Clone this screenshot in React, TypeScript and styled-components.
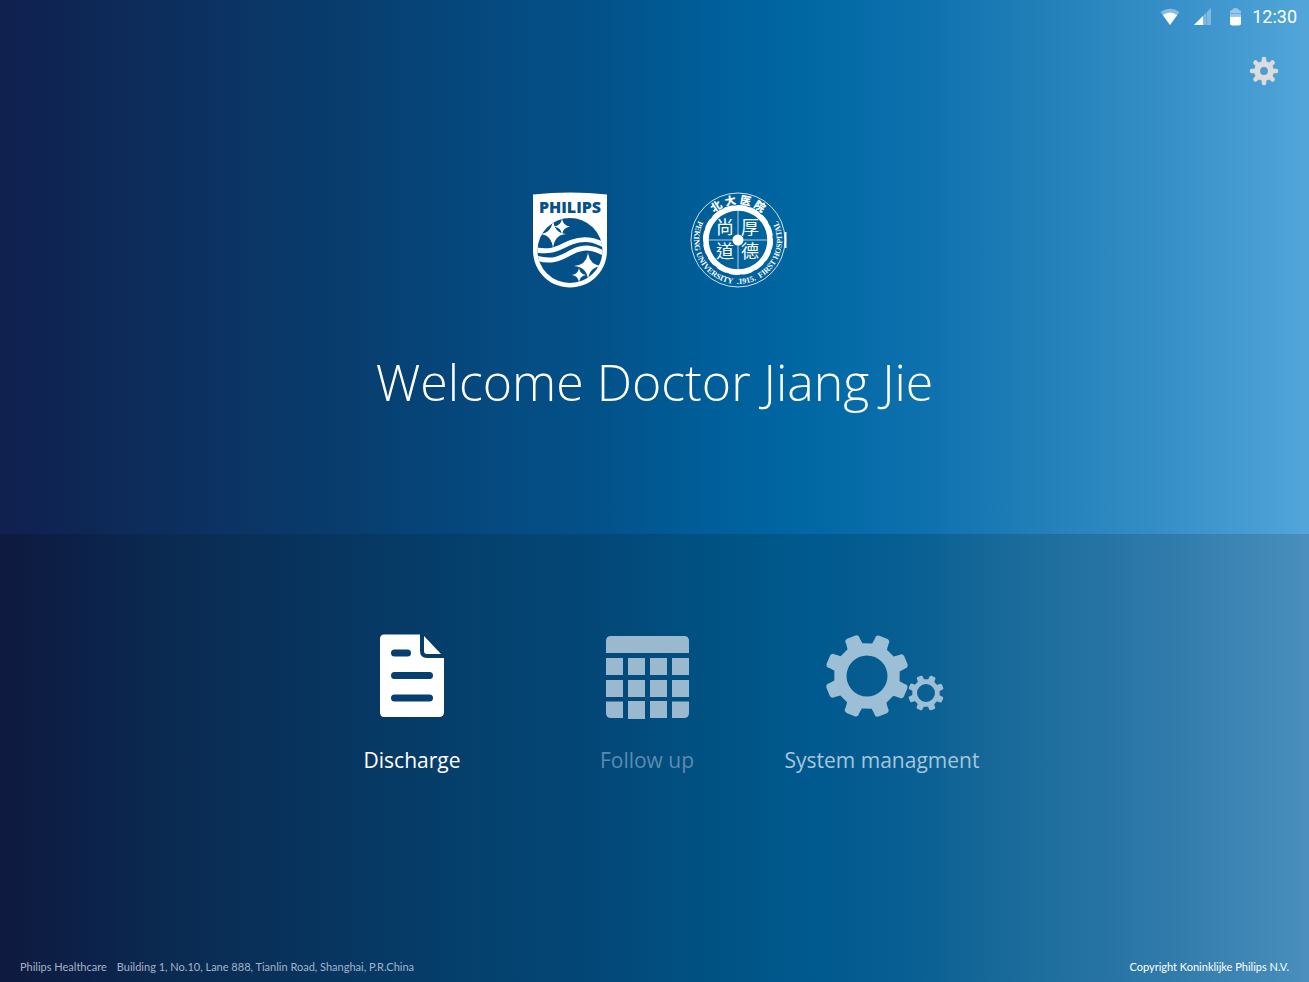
import React from "react";
import styled, { createGlobalStyle } from "styled-components";

const GlobalStyle = createGlobalStyle`
  *, *::before, *::after { box-sizing: border-box; }
  body {
    margin: 0;
    font-family: "Open Sans", "Noto Sans", sans-serif;
    color: #fff;
  }
`;

const Screen = styled.div`
  min-height: 100vh;
  display: grid;
  grid-template-rows: 534fr 448fr;
`;

const Hero = styled.header`
  display: flex;
  flex-direction: column;
  align-items: center;
  background: linear-gradient(
    90deg,
    #10204f 0%,
    #0d2a58 9%,
    #0b3464 18%,
    #073f70 28%,
    #054a80 38%,
    #03528a 46%,
    #005e99 54%,
    #0067a3 61%,
    #0c70ad 70%,
    #2380b9 80%,
    #3a93ca 91%,
    #52a6da 100%
  );
`;

const StatusBar = styled.div`
  align-self: stretch;
  display: flex;
  justify-content: flex-end;
  align-items: center;
  height: 34px;
  padding-right: 12px;
`;

const StatusIcons = styled.div`
  display: flex;
  align-items: center;
  gap: 13px;
  margin-right: 6px;
`;

const Clock = styled.time`
  font: 400 18px/34px Roboto, sans-serif;
`;

const Tools = styled.div`
  align-self: stretch;
  display: flex;
  justify-content: flex-end;
  padding: 22px 30px 0 0;
`;

const IconButton = styled.button`
  display: flex;
  padding: 0;
  border: 0;
  background: none;
  cursor: pointer;
`;

const Logos = styled.div`
  display: flex;
  align-items: flex-start;
  gap: 82px;
  margin: 106px 0 0 10px;
`;

const Title = styled.h1`
  margin: 60px 0 0;
  font-size: 50px;
  line-height: 68px;
  font-weight: 300;
`;

const Panel = styled.main`
  display: flex;
  flex-direction: column;
  justify-content: space-between;
  background: linear-gradient(
    90deg,
    #0f1a3f 0%,
    #0c2048 6%,
    #0b2950 12%,
    #07355f 25%,
    #053f6c 35%,
    #034878 46%,
    #005384 55%,
    #00598e 62%,
    #075e92 69%,
    #196a9a 77%,
    #2f7aaa 89%,
    #4a8fbd 100%
  );
`;

const Menu = styled.nav`
  display: grid;
  grid-template-columns: repeat(3, 235px);
  justify-content: center;
  padding: 98px 15px 0 0;
`;

const MenuItem = styled.button<{ $tone: string }>`
  display: flex;
  flex-direction: column;
  align-items: center;
  gap: 26px;
  padding: 0;
  border: 0;
  background: none;
  color: ${(p) => p.$tone};
  font: 400 21px/28px "Open Sans", "Noto Sans", sans-serif;
  white-space: nowrap;
  cursor: pointer;
`;

const Footer = styled.footer`
  display: flex;
  justify-content: space-between;
  padding: 0 20px 6px;
  font: 400 11px/18px Lato, sans-serif;
`;

const Address = styled.address`
  display: flex;
  gap: 10px;
  font-style: normal;
  color: #a3b3c9;
`;

function gearPath(cx: number, cy: number, outer: number, inner: number, hole: number, start: number, base: number, tip: number) {
  const pt = (r: number, deg: number) => {
    const a = (deg * Math.PI) / 180;
    return `${(cx + r * Math.cos(a)).toFixed(2)} ${(cy + r * Math.sin(a)).toFixed(2)}`;
  };
  const shoulder = outer * 0.91;
  let d = "";
  for (let i = 0; i < 8; i++) {
    const a = start + i * 45;
    d += `${i ? "L" : "M"}${pt(inner, a - base)}L${pt(shoulder, a - tip)}`;
    d += `Q${pt(outer, a - tip)} ${pt(outer, a - tip + 5)}L${pt(outer, a + tip - 5)}`;
    d += `Q${pt(outer, a + tip)} ${pt(shoulder, a + tip)}L${pt(inner, a + base)}`;
  }
  return `${d}Z M${cx + hole} ${cy}A${hole} ${hole} 0 1 0 ${cx - hole} ${cy}A${hole} ${hole} 0 1 0 ${cx + hole} ${cy}Z`;
}

const star = (x: number, y: number, rx: number, ry: number) => {
  const k = 1;
  return `M${x} ${y - ry}Q${x + k} ${y - k} ${x + rx} ${y}Q${x + k} ${y + k} ${x} ${y + ry}Q${x - k} ${y + k} ${x - rx} ${y}Q${x - k} ${y - k} ${x} ${y - ry}Z`;
};

const WifiIcon = () => (
  <svg width="20" height="18" viewBox="0 0 20 18" aria-label="Wi-Fi" role="img">
    <path d="M.5 4Q10 -2.500 19.500 4L10 17Z" fill="#fff" opacity=".4" />
    <path d="M2.800 7Q10 2 17.200 7L10 17Z" fill="#fff" opacity=".95" />
  </svg>
);

const SignalIcon = () => (
  <svg width="20" height="18" viewBox="0 0 20 18" aria-label="Signal" role="img">
    <path d="M18 0V17H1Z" fill="#fff" opacity=".35" />
    <path d="M10 8V17H1Z" fill="#fff" opacity=".95" />
    <path d="M13.500 4.500V17" stroke="#4a9dd0" strokeWidth="1" opacity=".6" />
  </svg>
);

const BatteryIcon = () => (
  <svg width="20" height="18" viewBox="0 0 20 18" aria-label="Battery" role="img">
    <path d="M4 8V4Q4 2 6 2Q7 0 9.500 0Q12 0 13 2Q15 2 15 4V8Z" fill="#fff" opacity=".45" />
    <path d="M4 5.500H15" stroke="#4a9dd0" opacity=".6" />
    <path d="M4 8.500H15V15.500Q15 17.500 12.500 17.500H6.500Q4 17.500 4 15.500Z" fill="#fff" />
  </svg>
);

const SettingsIcon = () => (
  <svg width="30" height="30" viewBox="0 0 30 30" aria-hidden="true">
    <g fill="none" stroke="#dcdcdc" strokeLinecap="round">
      <circle cx="15" cy="15" r="6.900" strokeWidth="6" />
      {[0, 45, 90, 135, 180, 225, 270, 315].map((a) => (
        <path key={a} d="M15 5.500V3" strokeWidth="4.600" transform={`rotate(${a} 15 15)`} />
      ))}
    </g>
  </svg>
);

const PhilipsShield = () => (
  <svg width="76" height="96" viewBox="0 0 76 96" role="img" aria-label="Philips">
    <path d="M1 2.500Q38 -1.500 75 2.500V58C75 80 58 95.500 38 95.500S1 80 1 58Z" fill="#fff" />
    <text x="38" y="21" textAnchor="middle" fill="#04518a" fontFamily="Open Sans, sans-serif" fontWeight="800" fontSize="16">PHILIPS</text>
    <clipPath id="globe"><circle cx="38" cy="58.500" r="32.500" /></clipPath>
    <circle cx="38" cy="58.500" r="32.500" fill="#04518a" />
    <g clipPath="url(#globe)">
      <g fill="none" stroke="#fff" strokeWidth="5">
        <path d="M2 57.500C22 62 29 54 40 50C52 45.500 62 47 74 54" />
        <path d="M2 65.500C22 72 30 65 40 60C52 54 62 55 74 62.500" />
      </g>
      <g fill="#fff">
        <path d={star(21, 42, 13, 15)} />
        <path d={star(30, 34.500, 8, 8)} />
        <path d={star(56, 74, 14, 14)} />
        <path d={star(47, 83, 7, 7)} />
      </g>
    </g>
  </svg>
);

const HospitalSeal = () => (
  <svg width="98" height="96" viewBox="0 0 98 96" overflow="visible" role="img" aria-label="Peking University First Hospital">
    <defs>
      <path id="sealBottom" d="M12.400 22.100A44 44 0 1 0 83.600 22.100" />
    </defs>
    <circle cx="48" cy="48" r="47" fill="none" stroke="#fff" strokeWidth="1" opacity=".8" />
    <path d="M95.500 40V56" stroke="#fff" strokeWidth="2" />
    <circle cx="48" cy="48" r="32" fill="none" stroke="#fff" strokeWidth="5.500" />
    <circle cx="48" cy="48" r="32.800" fill="none" stroke="#fff" strokeWidth="4.500" strokeDasharray="7 5.881" strokeLinecap="round" />
    <path d="M48 18V78M18 48H78" stroke="#fff" strokeWidth="1" opacity=".7" />
    <circle cx="48" cy="48" r="5.500" fill="#fff" />
    <g fill="#fff" fontFamily="Noto Sans CJK TC, sans-serif" fontSize="18" textAnchor="middle">
      <text x="35" y="42">尚</text>
      <text x="60" y="42">厚</text>
      <text x="35" y="66">道</text>
      <text x="60" y="66">德</text>
    </g>
    <g fill="#fff" fontFamily="Noto Sans CJK SC, sans-serif" fontSize="11" fontWeight="900" textAnchor="middle">
      {["北", "大", "医", "院"].map((c, i) => (
        <text key={c} x="48" y="12" transform={`rotate(${-33 + i * 22} 48 48)`}>{c}</text>
      ))}
    </g>
    <text fill="#fff" fontFamily="Liberation Serif, serif" fontSize="8" fontWeight="700" textAnchor="middle">
      <textPath href="#sealBottom" startOffset="50%">{"PEKING UNIVERSITY\u2002.1915.\u2002FIRST HOSPITAL"}</textPath>
    </text>
  </svg>
);

const DocumentIcon = () => (
  <svg width="66" height="88" viewBox="0 0 66 88" aria-hidden="true">
    <path d="M5 2.500H41V19Q41 26 48 26H65V80Q65 85 60 85H5Q1 85 1 80V7Q1 2.500 5 2.500Z" fill="currentColor" />
    <path d="M45 4L62 22H48Q45 22 45 19Z" fill="currentColor" />
    <path d="M15.500 21H28.500M15.500 43.500H50.500M15.500 66H50.500" stroke="#063f70" strokeWidth="7" strokeLinecap="round" />
  </svg>
);

const CalendarIcon = () => (
  <svg width="84" height="88" viewBox="0 0 84 88" aria-hidden="true" fill="#9ab9cf">
    <path d="M1 21V9Q1 4 6 4H79Q84 4 84 9V21Z" />
    {[26, 48].map((y) => [1, 23, 45, 67].map((x) => <path key={`${x}-${y}`} d={`M${x} ${y}h17v17h-17z`} />))}
    <path d="M1 69.500H18V86H6Q1 86 1 81ZM23 69h17v18h-17zM45 69h17v17h-17zM67 69.500H84V81Q84 86 79 86H67Z" />
  </svg>
);

const GearsIcon = () => (
  <svg width="124" height="88" viewBox="-4 0 124 88" aria-hidden="true" fill="#9dbfd6" fillRule="evenodd">
    <path d={gearPath(43, 44, 42.2, 33, 20.5, 23, 14, 11)} />
    <path d={gearPath(102, 61, 18, 13.8, 9, 23, 14, 11)} />
  </svg>
);

export default function App() {
  return (
    <>
      <GlobalStyle />
      <Screen>
        <Hero>
          <StatusBar>
            <StatusIcons>
              <WifiIcon />
              <SignalIcon />
              <BatteryIcon />
            </StatusIcons>
            <Clock>12:30</Clock>
          </StatusBar>
          <Tools>
            <IconButton type="button" aria-label="Settings"><SettingsIcon /></IconButton>
          </Tools>
          <Logos>
            <PhilipsShield />
            <HospitalSeal />
          </Logos>
          <Title>Welcome Doctor Jiang Jie</Title>
        </Hero>
        <Panel>
          <Menu aria-label="Main menu">
            <MenuItem type="button" $tone="#ffffff"><DocumentIcon />Discharge</MenuItem>
            <MenuItem type="button" $tone="#5b8bb0"><CalendarIcon />Follow up</MenuItem>
            <MenuItem type="button" $tone="#a5c6dd"><GearsIcon />System managment</MenuItem>
          </Menu>
          <Footer>
            <Address>
              <span>Philips Healthcare</span>
              <span>Building 1, No.10, Lane 888, Tianlin Road, Shanghai, P.R.China</span>
            </Address>
            <span>Copyright Koninklijke Philips N.V.</span>
          </Footer>
        </Panel>
      </Screen>
    </>
  );
}
